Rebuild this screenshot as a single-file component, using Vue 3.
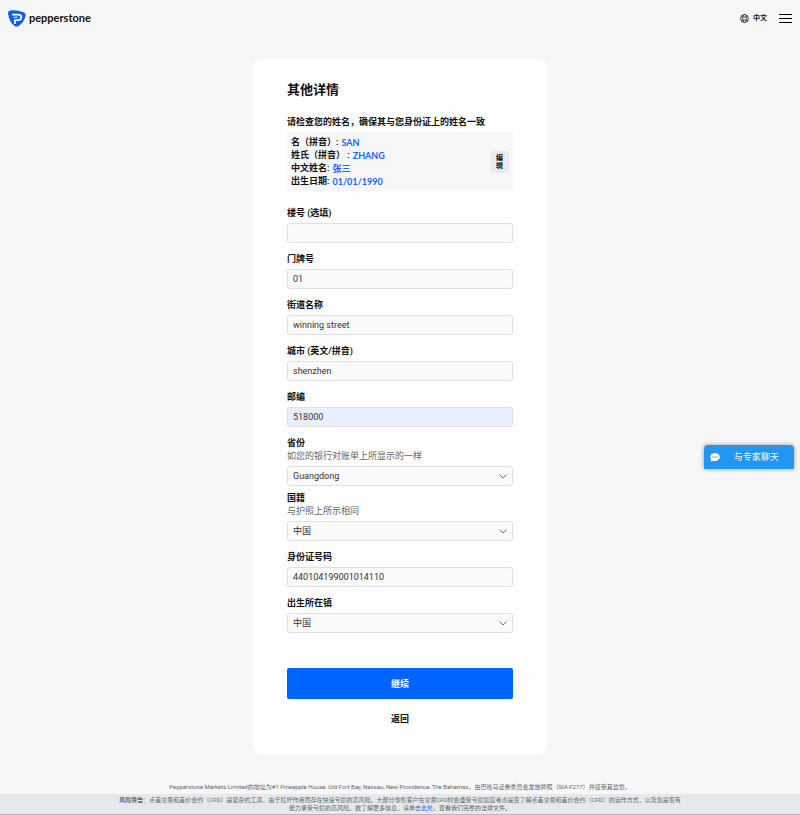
<script setup>
import { reactive } from 'vue'

const person = [
  { label: '名（拼音）:', value: 'SAN' },
  { label: '姓氏（拼音） :', value: 'ZHANG' },
  { label: '中文姓名:', value: '张三' },
  { label: '出生日期:', value: '01/01/1990' },
]

const fields = reactive([
  { id: 'building', label: '楼号 (选填)', value: '' },
  { id: 'house', label: '门牌号', value: '01' },
  { id: 'street', label: '街道名称', value: 'winning street' },
  { id: 'city', label: '城市 (英文/拼音)', value: 'shenzhen' },
  { id: 'postcode', label: '邮编', value: '518000', filled: true },
  { id: 'province', label: '省份', value: 'Guangdong', hint: '如您的银行对账单上所显示的一样', options: ['Guangdong'] },
  { id: 'nationality', label: '国籍', value: '中国', hint: '与护照上所示相同', options: ['中国'], tight: true },
  { id: 'idnumber', label: '身份证号码', value: '440104199001014110' },
  { id: 'birthplace', label: '出生所在镇', value: '中国', options: ['中国'] },
])
</script>

<template>
  <div class="page">
    <header class="topbar">
      <a class="brand" href="#">
        <svg class="mark" viewBox="0 0 36 34" aria-hidden="true">
          <path d="M4 1Q18 -1 32 5Q36 7 35 12Q32 25 21 32Q17 34 13 32Q2 24 0 6Q0 2 4 1Z" fill="#0a5cff" />
          <path d="M8 9H21A5.500 5.500 0 0 1 21 20H14V28" fill="none" stroke="#fff" stroke-width="3.500" />
          <path d="M11 14.500H19" fill="none" stroke="#fff" stroke-width="2" />
        </svg>
        <span>pepperstone</span>
      </a>
      <nav class="tools">
        <button class="language" type="button">
          <svg viewBox="0 0 18 18" fill="none" stroke="#222" stroke-width="1.500" aria-hidden="true">
            <circle cx="9" cy="9" r="8" />
            <ellipse cx="9" cy="9" rx="3.700" ry="8" />
            <path d="M2 6H16M2 12H16" />
          </svg>
          <span>中文</span>
        </button>
        <button class="menu" type="button" aria-label="菜单">
          <i></i><i></i><i></i>
        </button>
      </nav>
    </header>

    <main class="card">
      <h1>其他详情</h1>
      <p class="check">请检查您的姓名，确保其与您身份证上的姓名一致</p>
      <section class="summary">
        <dl>
          <div v-for="row in person" :key="row.label">
            <dt>{{ row.label }}</dt>
            <dd>{{ row.value }}</dd>
          </div>
        </dl>
        <button class="edit" type="button">编辑</button>
      </section>

      <form @submit.prevent>
        <div v-for="f in fields" :key="f.id" class="field" :class="{ tight: f.tight }">
          <label :for="f.id">{{ f.label }}</label>
          <p v-if="f.hint" class="hint">{{ f.hint }}</p>
          <div v-if="f.options" class="select">
            <select :id="f.id" v-model="f.value">
              <option v-for="o in f.options" :key="o">{{ o }}</option>
            </select>
            <svg viewBox="0 0 8 5" aria-hidden="true"><path d="M.5 .5L4 4L7.500 .5" fill="none" stroke="#777" /></svg>
          </div>
          <input v-else :id="f.id" v-model="f.value" type="text" :class="{ filled: f.filled }" />
        </div>
        <button class="submit" type="submit">继续</button>
        <button class="back" type="button">返回</button>
      </form>
    </main>

    <footer>
      <p class="address">Pepperstone Markets Limited的地址为#1 Pineapple House, Old Fort Bay, Nassau, New Providence, The Bahamas，由巴哈马证券委员会发放牌照（SIA-F217）并接受其监管。</p>
      <div class="risk">
        <p><strong>风险警告</strong>：点差交易和差价合约（CFD）是复杂的工具，由于杠杆作用而存在快速亏损的高风险。大部分零售客户在交易CFD时会遭受亏损您应考虑是否了解点差交易和差价合约（CFD）的运作方式，以及您是否有<br />能力承受亏损的高风险。欲了解更多信息，请单击<a href="#">此处</a>，查看我们完整的法律文件。</p>
      </div>
    </footer>

    <button class="chat" type="button">
      <svg viewBox="0 0 20 18" aria-hidden="true">
        <ellipse cx="10" cy="8" rx="9.500" ry="8" fill="#fff" />
        <path d="M3 12L1 17L9 15Z" fill="#fff" />
        <g fill="#2196f3"><circle cx="6" cy="8" r="1.300" /><circle cx="10" cy="8" r="1.300" /><circle cx="14" cy="8" r="1.300" /></g>
      </svg>
      <span>与专家聊天</span>
    </button>
  </div>
</template>

<style>
body {
  background: #f7f7f7;
}
</style>

<style scoped>
.page {
  min-height: 100vh;
  display: flex;
  flex-direction: column;
  background: #f7f7f7;
  color: #111;
  font-family: Roboto, "Noto Sans CJK SC", sans-serif;
  font-size: 9px;
  line-height: 13px;
}
.page * {
  box-sizing: border-box;
}
h1, p, dl, dd {
  margin: 0;
}
button, input, select {
  margin: 0;
  font: inherit;
  color: inherit;
}
button {
  padding: 0;
  border: 0;
  background: none;
  cursor: pointer;
}
a {
  color: #1463ff;
  text-decoration: none;
}
.topbar {
  display: flex;
  justify-content: space-between;
  align-items: center;
  height: 36px;
  padding: 0 8px;
}
.brand {
  display: flex;
  align-items: center;
  gap: 3px;
  color: #111;
  font: 700 11px/16px Lato, sans-serif;
}
.mark {
  width: 18px;
  height: 17px;
}
.tools, .language {
  display: flex;
  align-items: center;
}
.tools {
  gap: 12px;
}
.language {
  gap: 4px;
  font-size: 7px;
  font-weight: 700;
}
.language svg {
  width: 9px;
  height: 9px;
}
.menu {
  display: flex;
  flex-direction: column;
  gap: 3px;
  width: 13px;
}
.menu i {
  height: 1px;
  background: #000;
}
.card {
  width: 294px;
  max-width: 100%;
  margin: 23px auto 0;
  padding: 21px 34px 29px;
  border-radius: 9px;
  background: #fff;
}
h1 {
  font-size: 13px;
  line-height: 20px;
  font-weight: 600;
}
.check {
  margin: 16px 0 3px;
  font-weight: 600;
}
.summary {
  display: flex;
  justify-content: space-between;
  align-items: center;
  padding: 4px 4px 3px;
  border-radius: 2px;
  background: #f7f7f7;
}
.summary dl div {
  display: flex;
  gap: 3px;
}
dt {
  font-weight: 600;
}
dd {
  color: #1463ff;
  font-family: Lato, "Noto Sans CJK SC", sans-serif;
  font-weight: 700;
}
.edit {
  width: 19px;
  padding: 3px 6px;
  border-radius: 2px;
  background: #ececec;
  font-size: 7px;
  line-height: 8px;
  font-weight: 700;
}
form {
  display: flex;
  flex-direction: column;
  padding-top: 6px;
}
.field {
  display: flex;
  flex-direction: column;
  padding-top: 10px;
}
.tight {
  padding-top: 6px;
}
label {
  font-weight: 600;
}
.hint {
  color: #666;
}
input, select {
  width: 100%;
  height: 20px;
  padding: 0 5px;
  border: 1px solid #e0e0e0;
  border-radius: 3px;
  background: #fafafa;
  color: #333;
}
.field > input, .select {
  margin-top: 3px;
}
.filled {
  background: #e8f0fe;
}
.select {
  display: grid;
  align-items: center;
}
.select > * {
  grid-area: 1 / 1;
}
select {
  appearance: none;
}
.select svg {
  width: 8px;
  height: 5px;
  margin-right: 6px;
  justify-self: end;
  pointer-events: none;
}
.submit {
  height: 31px;
  margin-top: 35px;
  padding-top: 1px;
  border-radius: 2px;
  background: #0064ff;
  color: #fff;
  font-weight: 700;
}
.back {
  align-self: center;
  margin-top: 14px;
  font-weight: 600;
}
footer {
  margin-top: auto;
  color: #666;
  font-size: 6px;
  line-height: 8px;
  text-align: center;
}
.address {
  padding-bottom: 3px;
}
.risk {
  padding: 2px 16px;
  border-bottom: 1px solid #b4b8bb;
  background: #e5e9ec;
}
.chat {
  position: fixed;
  top: 445px;
  right: 6px;
  display: flex;
  align-items: center;
  justify-content: space-between;
  width: 90px;
  height: 24px;
  padding: 0 15px 0 6px;
  border-radius: 4px 4px 0 0;
  background: #2196f3;
  box-shadow: 0 0 4px #0006;
  color: #fff;
}
.chat svg {
  width: 10px;
  height: 9px;
}
</style>
